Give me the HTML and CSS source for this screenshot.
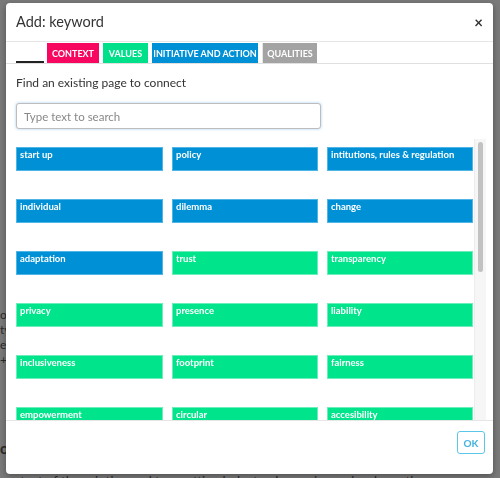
FILE: index.html
```html
<!DOCTYPE html>
<html>
<head>
<meta charset="utf-8">
<link rel="stylesheet" href="styles.css">
</head>
<body>
<div class="page">
  <div class="page-rule"></div>
  <div class="page-lines">
    <p>on</p>
    <p>ty</p>
    <p>e</p>
    <p>+</p>
  </div>
  <div class="page-rule low"></div>
  <h3 class="page-head">o:</h3>
  <p class="page-foot">my text of the printing and typesetting industry. Lorem ipsum has been the</p>
</div>

<div class="modal">
  <div class="modal-header">
    <span class="modal-title">Add: keyword</span>
    <span class="modal-close">×</span>
  </div>
  <div class="tabs">
    <span class="tab tab-active"></span>
    <span class="tab tab-context">CONTEXT</span>
    <span class="tab tab-values">VALUES</span>
    <span class="tab tab-initiative">INITIATIVE AND ACTION</span>
    <span class="tab tab-qualities">QUALITIES</span>
  </div>
  <div class="modal-body">
    <p class="label">Find an existing page to connect</p>
    <input class="search" type="text" placeholder="Type text to search">
    <div class="results-wrap">
      <div class="results">
        <div class="grid">
          <div class="item blue">start up</div>
          <div class="item blue">policy</div>
          <div class="item blue">intitutions, rules &amp; regulation</div>
          <div class="item blue">individual</div>
          <div class="item blue">dilemma</div>
          <div class="item blue">change</div>
          <div class="item blue">adaptation</div>
          <div class="item green">trust</div>
          <div class="item green">transparency</div>
          <div class="item green">privacy</div>
          <div class="item green">presence</div>
          <div class="item green">liability</div>
          <div class="item green">inclusiveness</div>
          <div class="item green">footprint</div>
          <div class="item green">fairness</div>
          <div class="item green">empowerment</div>
          <div class="item green">circular</div>
          <div class="item green">accesibility</div>
        </div>
      </div>
      <div class="scrollbar"><div class="thumb"></div></div>
    </div>
  </div>
  <div class="modal-footer">
    <button class="ok">OK</button>
  </div>
</div>
</body>
</html>
```

FILE: styles.css
```css
html, body {
  margin: 0;
  padding: 0;
  height: 100%;
  overflow: hidden;
}
body {
  background: #7a7a7a;
  font-family: Lato, "Open Sans", sans-serif;
  color: #333;
}
.page {
  height: 478px;
  display: flex;
  flex-direction: column;
  color: #2a2a2a;
  font-size: 12px;
}
.page-rule {
  margin-top: 33px;
  height: 1px;
  background: #5e5e5e;
}
.page-rule.low {
  margin-top: 40px;
}
.page-lines {
  margin-top: 274px;
}
.page-lines p {
  margin: 0;
  line-height: 15px;
}
.page-head {
  margin: 32px 0 0 0;
  font-size: 15px;
  line-height: 18px;
  font-weight: 700;
}
.page-foot {
  margin: 16px 0 0 0;
  font-size: 13px;
  line-height: 16px;
}

.modal {
  position: fixed;
  left: 6px;
  top: 3px;
  width: 487px;
  height: 471px;
  background: #fff;
  border-radius: 4px;
  box-shadow: 0 2px 6px rgba(0,0,0,0.35);
  display: flex;
  flex-direction: column;
  overflow: hidden;
}
.modal-header {
  height: 38px;
  flex: none;
  display: flex;
  align-items: center;
  justify-content: space-between;
  padding: 0 10px;
  border-bottom: 1px solid #e6e6e6;
}
.modal-title {
  font-size: 14.5px;
  color: #333;
  margin-top: -1px;
}
.modal-close {
  font-size: 15px;
  font-weight: 700;
  color: #333;
  line-height: 1;
}
.tabs {
  flex: none;
  display: flex;
  padding: 1px 10px 0 10px;
  height: 20px;
  border-bottom: 1px solid #e0e0e0;
  gap: 4px;
}
.tab {
  height: 20px;
  box-sizing: border-box;
  padding: 0;
  font-size: 9px;
  font-weight: 700;
  color: #fff;
  display: flex;
  align-items: center;
  justify-content: center;
  white-space: nowrap;
}
.tab-active {
  width: 28px;
  margin-right: -1px;
  border-bottom: 2px solid #222;
}
.tab-context { background: #f7075f; width: 52px; }
.tab-values { background: #00e08b; width: 45px; }
.tab-initiative { background: #0090d5; width: 106px; }
.tab-qualities {
  background: #a3a3a3;
  width: 55px;
  border-left: 1px solid #e6e6e6;
}
.modal-body {
  flex: 1;
  display: flex;
  flex-direction: column;
  padding: 0 7px 0 10px;
  min-height: 0;
}
.label {
  margin: 10px 0 0 0;
  font-size: 12px;
  line-height: 18px;
  color: #333;
}
.search {
  margin-top: 11px;
  width: 305px;
  height: 26px;
  box-sizing: border-box;
  border: 1px solid #bdbdbd;
  border-radius: 3px;
  padding: 0 7px;
  font-family: Lato, "Open Sans", sans-serif;
  font-size: 11.5px;
  color: #333;
  box-shadow: 0 0 3px rgba(102,175,233,0.6);
  outline: none;
}
.search::placeholder {
  color: #888;
}
.results-wrap {
  margin-top: 10px;
  flex: 1;
  min-height: 0;
  display: flex;
}
.results {
  flex: 1;
  overflow: hidden;
}
.scrollbar {
  flex: none;
  width: 12px;
  background: #f6f6f6;
  border-left: 1px solid #ededed;
  padding: 3px 3px 0 3px;
  box-sizing: border-box;
}
.thumb {
  height: 130px;
  background: #c2c2c2;
  border-radius: 3px;
}
.grid {
  display: grid;
  grid-template-columns: 147px 146px 146px;
  column-gap: 9px;
  row-gap: 28px;
  padding: 8px 0 20px 0;
}
.item {
  height: 24px;
  box-sizing: border-box;
  padding: 0 3px;
  font-size: 9.5px;
  font-weight: 700;
  color: #fff;
  line-height: 14px;
  white-space: nowrap;
  overflow: hidden;
}
.blue { background: #0090d5; border: 1px solid #4fb4e6; }
.green { background: #00e48b; border: 1px solid #6ceebb; }
.modal-footer {
  flex: none;
  height: 54px;
  box-sizing: border-box;
  border-top: 1px solid #e6e6e6;
  display: flex;
  justify-content: flex-end;
  align-items: flex-start;
  padding: 10px 8px 0 0;
}
.ok {
  width: 28px;
  height: 23px;
  padding: 0;
  background: #fff;
  border: 1px solid #5bc6e8;
  border-radius: 3px;
  color: #45b3dc;
  font-family: Lato, "Open Sans", sans-serif;
  font-size: 10px;
  font-weight: 700;
}
```
